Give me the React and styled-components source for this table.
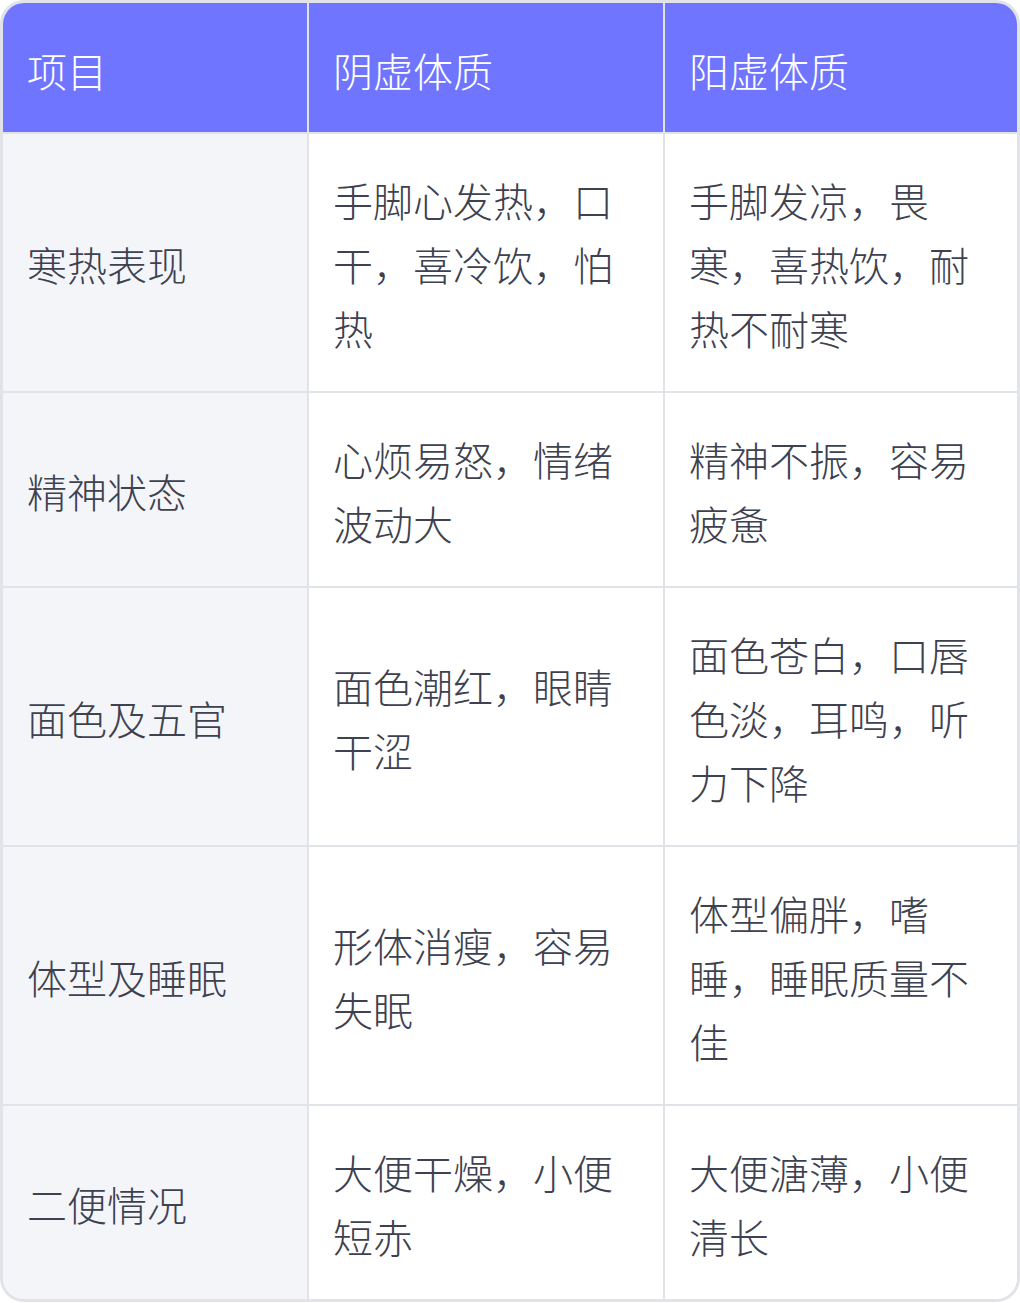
import styled, { createGlobalStyle } from "styled-components";

const GlobalStyle = createGlobalStyle`
    body {
        margin: 0;
        background: #ffffff;
        font-family: "Noto Sans CJK SC", "Noto Sans", sans-serif;
    }
`
const Wrap = styled.div`
    width: 1020px;
    box-sizing: border-box;
    border: 3px solid #e2e3e8;
    border-radius: 24px;
    overflow: hidden;
`
const Table = styled.table`
    width: 100%;
    table-layout: fixed;
    border-collapse: separate;
    border-spacing: 0;
`
const HeadCell = styled.th`
    background: #7075ff;
    color: #ffffff;
    font-weight: 300;
    font-size: 40px;
    line-height: 64px;
    text-align: left;
    padding: 35px 24px 30px 24px;
    border-right: ${(p) => (p.$last ? "none" : "2px solid #e2e3e8")};
    border-bottom: 2px solid #e2e3e8;
`
const Cell = styled.td`
    background: ${(p) => (p.$label ? "#f4f5f9" : "#ffffff")};
    color: #3d4150;
    font-weight: 300;
    font-size: 40px;
    line-height: 64px;
    vertical-align: middle;
    padding: 34px 24px 31px 24px;
    border-right: ${(p) => (p.$last ? "none" : "2px solid #e2e3e8")};
    border-bottom: ${(p) => (p.$bottom ? "none" : "2px solid #e2e3e8")};
`

const rows = [
    ["寒热表现", "手脚心发热，口干，喜冷饮，怕热", "手脚发凉，畏寒，喜热饮，耐热不耐寒"],
    ["精神状态", "心烦易怒，情绪波动大", "精神不振，容易疲惫"],
    ["面色及五官", "面色潮红，眼睛干涩", "面色苍白，口唇色淡，耳鸣，听力下降"],
    ["体型及睡眠", "形体消瘦，容易失眠", "体型偏胖，嗜睡，睡眠质量不佳"],
    ["二便情况", "大便干燥，小便短赤", "大便溏薄，小便清长"],
];

export default function App() {
    return (
        <>
            <GlobalStyle />
            <Wrap>
                <Table>
                    <colgroup>
                        <col style={{ width: "306px" }} />
                        <col style={{ width: "356px" }} />
                        <col style={{ width: "352px" }} />
                    </colgroup>
                    <thead>
                        <tr>
                            <HeadCell>项目</HeadCell>
                            <HeadCell>阴虚体质</HeadCell>
                            <HeadCell $last>阳虚体质</HeadCell>
                        </tr>
                    </thead>
                    <tbody>
                        {rows.map((r, i) => (
                            <tr key={r[0]}>
                                <Cell $label $bottom={i === rows.length - 1}>{r[0]}</Cell>
                                <Cell $bottom={i === rows.length - 1}>{r[1]}</Cell>
                                <Cell $last $bottom={i === rows.length - 1}>{r[2]}</Cell>
                            </tr>
                        ))}
                    </tbody>
                </Table>
            </Wrap>
        </>
    );
}
